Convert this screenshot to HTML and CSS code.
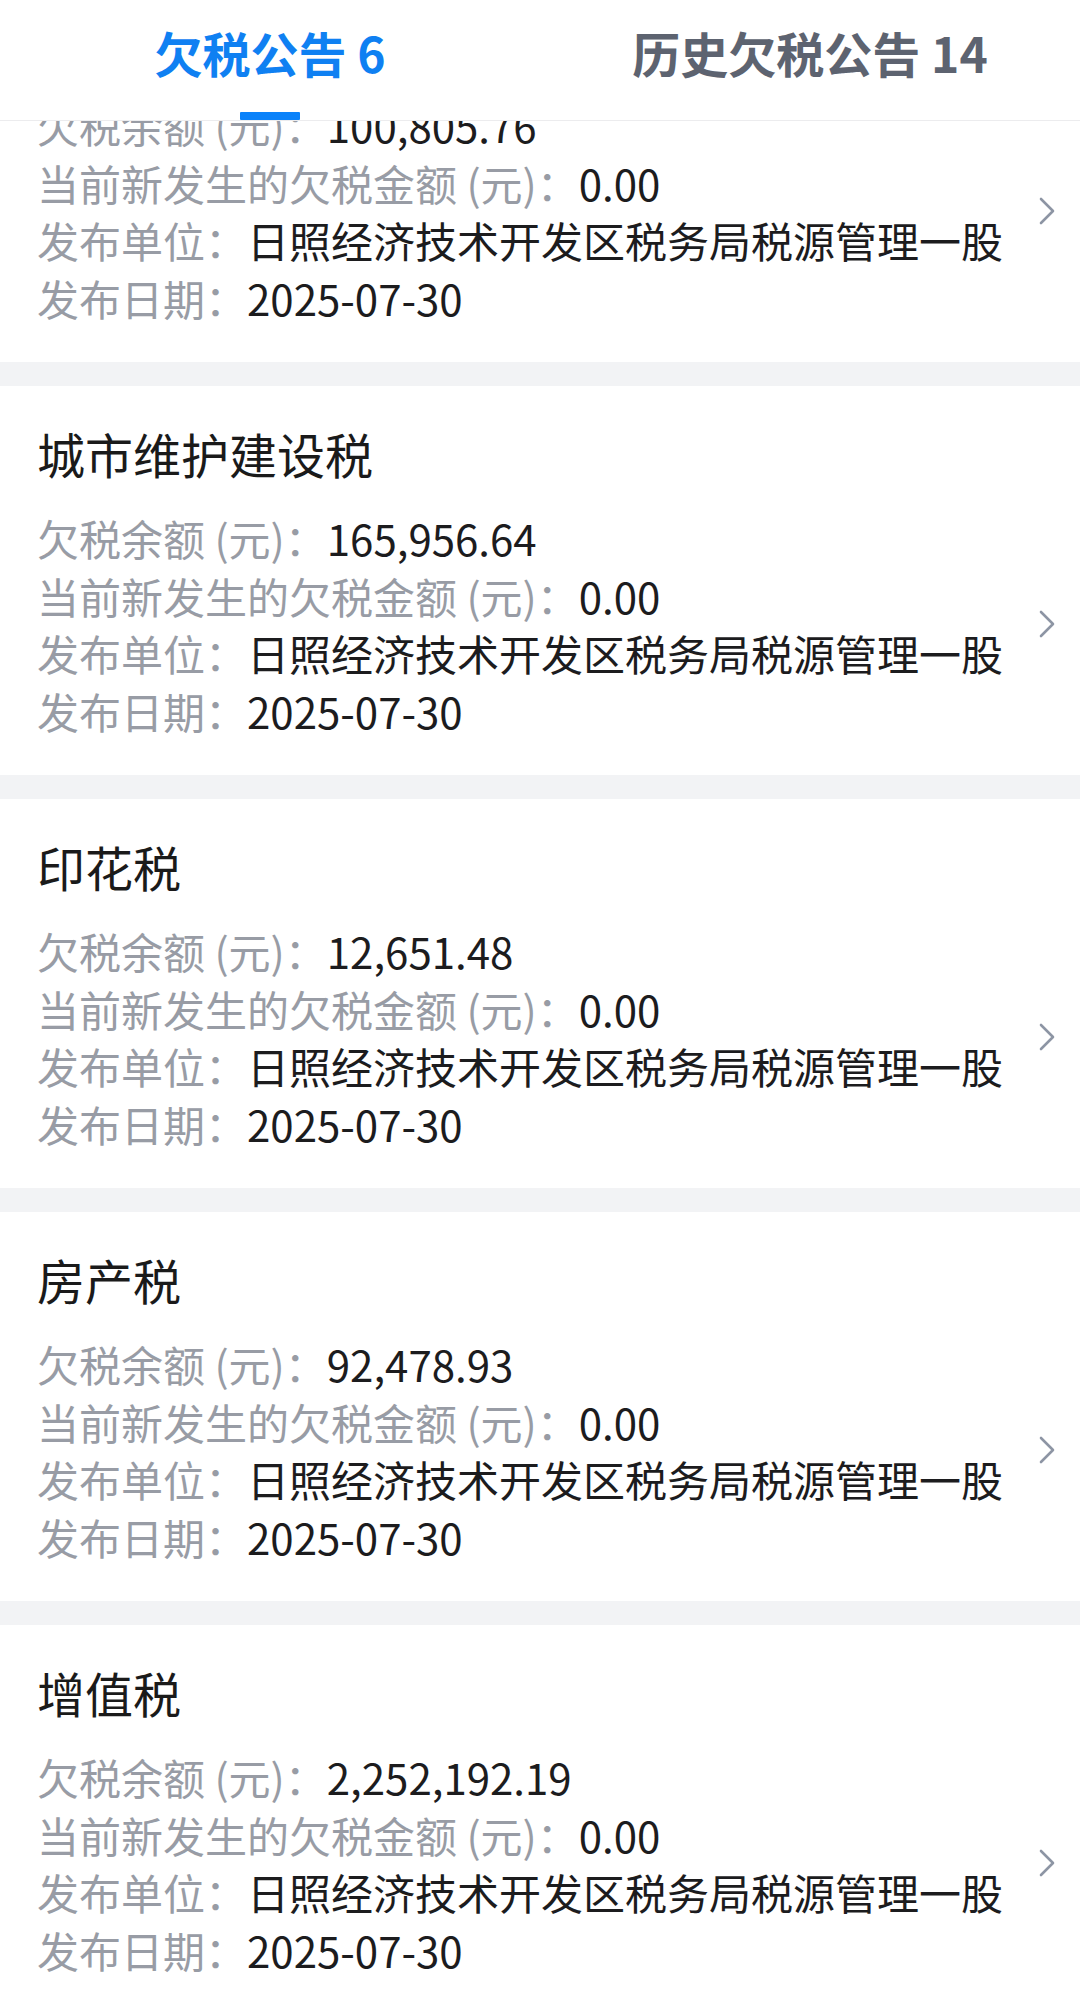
FILE: index.html
```html
<!DOCTYPE html>
<html lang="zh-CN">
<head>
    <meta charset="UTF-8">
    <meta name="viewport" content="width=device-width, initial-scale=1.0">
    <title>欠税公告</title>
    <link rel="stylesheet" href="styles.css">
</head>
<body>
    <header class="tabs">
        <div class="tab active">
            <span class="tab-label">欠税公告 6</span>
            <i class="tab-bar"></i>
        </div>
        <div class="tab">
            <span class="tab-label">历史欠税公告 14</span>
        </div>
    </header>

    <!-- scroll area, the list is scrolled down a bit (first card's title is out of view) -->
    <div class="viewport">
        <main class="list">
            <div class="card">
                <div class="card-body">
                    <div class="rows">
                        <div class="row"><span class="label">欠税余额 (元)：</span><span class="value">100,805.76</span></div>
                        <div class="row"><span class="label">当前新发生的欠税金额 (元)：</span><span class="value">0.00</span></div>
                        <div class="row"><span class="label">发布单位：</span><span class="value">日照经济技术开发区税务局税源管理一股</span></div>
                        <div class="row"><span class="label">发布日期：</span><span class="value">2025-07-30</span></div>
                    </div>
                    <svg class="arrow" viewBox="0 0 16 28"><polyline points="2,2 14,14 2,26"/></svg>
                </div>
            </div>

            <div class="card">
                <div class="card-title">城市维护建设税</div>
                <div class="card-body">
                    <div class="rows">
                        <div class="row"><span class="label">欠税余额 (元)：</span><span class="value">165,956.64</span></div>
                        <div class="row"><span class="label">当前新发生的欠税金额 (元)：</span><span class="value">0.00</span></div>
                        <div class="row"><span class="label">发布单位：</span><span class="value">日照经济技术开发区税务局税源管理一股</span></div>
                        <div class="row"><span class="label">发布日期：</span><span class="value">2025-07-30</span></div>
                    </div>
                    <svg class="arrow" viewBox="0 0 16 28"><polyline points="2,2 14,14 2,26"/></svg>
                </div>
            </div>

            <div class="card">
                <div class="card-title">印花税</div>
                <div class="card-body">
                    <div class="rows">
                        <div class="row"><span class="label">欠税余额 (元)：</span><span class="value">12,651.48</span></div>
                        <div class="row"><span class="label">当前新发生的欠税金额 (元)：</span><span class="value">0.00</span></div>
                        <div class="row"><span class="label">发布单位：</span><span class="value">日照经济技术开发区税务局税源管理一股</span></div>
                        <div class="row"><span class="label">发布日期：</span><span class="value">2025-07-30</span></div>
                    </div>
                    <svg class="arrow" viewBox="0 0 16 28"><polyline points="2,2 14,14 2,26"/></svg>
                </div>
            </div>

            <div class="card">
                <div class="card-title">房产税</div>
                <div class="card-body">
                    <div class="rows">
                        <div class="row"><span class="label">欠税余额 (元)：</span><span class="value">92,478.93</span></div>
                        <div class="row"><span class="label">当前新发生的欠税金额 (元)：</span><span class="value">0.00</span></div>
                        <div class="row"><span class="label">发布单位：</span><span class="value">日照经济技术开发区税务局税源管理一股</span></div>
                        <div class="row"><span class="label">发布日期：</span><span class="value">2025-07-30</span></div>
                    </div>
                    <svg class="arrow" viewBox="0 0 16 28"><polyline points="2,2 14,14 2,26"/></svg>
                </div>
            </div>

            <div class="card">
                <div class="card-title">增值税</div>
                <div class="card-body">
                    <div class="rows">
                        <div class="row"><span class="label">欠税余额 (元)：</span><span class="value">2,252,192.19</span></div>
                        <div class="row"><span class="label">当前新发生的欠税金额 (元)：</span><span class="value">0.00</span></div>
                        <div class="row"><span class="label">发布单位：</span><span class="value">日照经济技术开发区税务局税源管理一股</span></div>
                        <div class="row"><span class="label">发布日期：</span><span class="value">2025-07-30</span></div>
                    </div>
                    <svg class="arrow" viewBox="0 0 16 28"><polyline points="2,2 14,14 2,26"/></svg>
                </div>
            </div>
        </main>
    </div>
</body>
</html>
```

FILE: styles.css
```css
* {
    box-sizing: border-box;
}

html, body {
    height: 100%;
}

body {
    margin: 0;
    display: flex;
    flex-direction: column;
    background: #f2f3f5;
    font-family: "Noto Sans CJK SC", "Noto Sans", sans-serif;
    color: #1c1c1e;
}

/* Tabs on top */
.tabs {
    display: flex;
    flex: none;
    height: 121px;
    background: #fff;
    border-bottom: 1px solid #ececee;
}

.tab {
    flex: 1;
    display: flex;
    flex-direction: column;
    align-items: center;
}

.tab-label {
    padding-top: 28px;
    font-size: 48px;
    line-height: 48px;
    font-weight: 600;
    color: #5d6370;
}

.tab.active .tab-label {
    color: #0f80f2;
}

.tab-bar {
    display: block;
    width: 60px;
    height: 8px;
    margin-top: 36px;
    background: #0a82fa;
    border-radius: 1px;
}

/* Scrolled card list */
.viewport {
    flex: 1;
    overflow: hidden;
}

.list {
    display: flex;
    flex-direction: column;
    gap: 24px;
    margin-top: -60px;
}

.card {
    background: #fff;
    padding: 35px 25px 36px 37px;
}

.card-title {
    font-size: 48px;
    line-height: 64px;
    font-weight: 400;
    color: #1a1a1a;
    margin-bottom: 24px;
}

.card-body {
    display: flex;
    align-items: center;
}

.rows {
    flex: 1;
}

.row {
    font-size: 42px;
    line-height: 57.5px;
    white-space: nowrap;
}

.label {
    color: #989ca5;
}

.value {
    color: #1c1c1e;
}

.arrow {
    width: 16px;
    height: 28px;
    fill: none;
    stroke: #8d95a4;
    stroke-width: 2.6;
    stroke-linecap: round;
    stroke-linejoin: round;
}
```
